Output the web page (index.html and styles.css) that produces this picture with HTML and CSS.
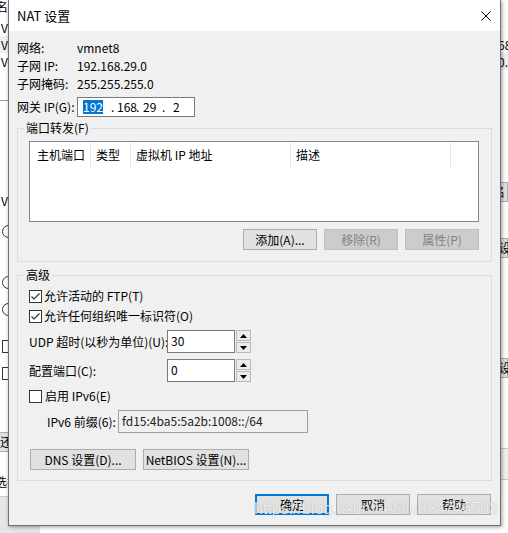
FILE: index.html
```html
<!DOCTYPE html>
<html lang="zh-CN">
<head>
<meta charset="utf-8">
<title>NAT 设置</title>
<link rel="stylesheet" href="styles.css">
</head>
<body>
<div class="desk">
  <div class="win win-left">
    <div class="wl-head">名称</div>
    <div class="wl-row">VMnet0</div>
    <div class="wl-row sel-row">VMnet1</div>
    <div class="wl-row">VMnet8</div>
    <div class="wl-line"></div>
    <div class="wl-row wl-v">VMnet</div>
    <div class="wl-radio"></div>
    <div class="wl-radio r2"></div>
    <div class="wl-radio r3"></div>
    <div class="wl-cb"></div>
    <div class="wl-cb c2"></div>
    <div class="wl-btn">还原默认设置</div>
    <div class="wl-text">选择</div>
    <div class="wl-foot"></div>
  </div>
  <div class="win win-right">
    <div class="wr-row">192.168.2.</div>
    <div class="wr-row alt">168.10.0</div>
    <div class="wr-btn b1">重命名</div>
    <div class="wr-btn b2">设置</div>
    <div class="wr-btn b3">设置</div>
    <div class="wr-foot"></div>
  </div>

  <div class="dialog">
    <div class="titlebar">
      <span class="title">NAT 设置</span>
      <svg class="close" width="10" height="10" viewBox="0 0 10 10"><path d="M0.5 0.5 L9.5 9.5 M9.5 0.5 L0.5 9.5" stroke="#000" stroke-width="1" fill="none"/></svg>
    </div>
    <div class="body">
      <div class="info">
        <span>网络:</span><span>vmnet8</span>
        <span>子网 IP:</span><span>192.168.29.0</span>
        <span>子网掩码:</span><span>255.255.255.0</span>
      </div>
      <div class="gw-row">
        <span class="gw-label">网关 IP(G):</span>
        <div class="ip-box">
          <span><span class="sel">192</span></span><span>.</span><span>168</span><span>.</span><span>29</span><span>.</span><span>2</span>
        </div>
      </div>

      <fieldset class="group">
        <legend>端口转发(F)</legend>
        <div class="pf-inner">
          <div class="listview">
            <div class="lv-head">
              <div class="col c1">主机端口</div>
              <div class="col c2">类型</div>
              <div class="col c3">虚拟机 IP 地址</div>
              <div class="col c4">描述</div>
            </div>
          </div>
          <div class="btn-row">
            <button class="btn">添加(A)...</button>
            <button class="btn" disabled>移除(R)</button>
            <button class="btn" disabled>属性(P)</button>
          </div>
        </div>
      </fieldset>

      <fieldset class="group group-adv">
        <legend>高级</legend>
        <div class="adv-inner">
          <label class="check-row"><span class="cb"><svg width="11" height="11" viewBox="0 0 11 11"><path d="M1.5 5.5 L4 8 L9.5 2.5" stroke="#333" stroke-width="1.2" fill="none"/></svg></span>允许活动的 FTP(T)</label>
          <label class="check-row"><span class="cb"><svg width="11" height="11" viewBox="0 0 11 11"><path d="M1.5 5.5 L4 8 L9.5 2.5" stroke="#333" stroke-width="1.2" fill="none"/></svg></span>允许任何组织唯一标识符(O)</label>
          <div class="field-row udp">
            <span class="field-label">UDP 超时(以秒为单位)(U):</span>
            <div class="spin">
              <div class="spin-input">30</div>
              <div class="spin-btns">
                <div class="spin-btn"><svg width="7" height="4" viewBox="0 0 7 4"><path d="M0 4 L3.5 0 L7 4 Z" fill="#000"/></svg></div>
                <div class="spin-btn"><svg width="7" height="4" viewBox="0 0 7 4"><path d="M0 0 L3.5 4 L7 0 Z" fill="#000"/></svg></div>
              </div>
            </div>
          </div>
          <div class="field-row port">
            <span class="field-label">配置端口(C):</span>
            <div class="spin">
              <div class="spin-input">0</div>
              <div class="spin-btns">
                <div class="spin-btn"><svg width="7" height="4" viewBox="0 0 7 4"><path d="M0 4 L3.5 0 L7 4 Z" fill="#000"/></svg></div>
                <div class="spin-btn"><svg width="7" height="4" viewBox="0 0 7 4"><path d="M0 0 L3.5 4 L7 0 Z" fill="#000"/></svg></div>
              </div>
            </div>
          </div>
          <label class="check-row ipv6"><span class="cb"></span>启用 IPv6(E)</label>
          <div class="prefix-row">
            <span class="prefix-label">IPv6 前缀(6):</span>
            <div class="prefix-box">fd15:4ba5:5a2b:1008::/64</div>
          </div>
          <div class="btn-row left">
            <button class="btn wide">DNS 设置(D)...</button>
            <button class="btn wide">NetBIOS 设置(N)...</button>
          </div>
        </div>
      </fieldset>

      <div class="footer">
        <button class="btn default">确定</button>
        <button class="btn">取消</button>
        <button class="btn">帮助</button>
      </div>
    </div>
  </div>
  <div class="watermark">https://blog.csdn.net/liu884746703</div>
</div>
</body>
</html>
```

FILE: styles.css
```css
html, body {
  margin: 0;
  padding: 0;
}
body {
  width: 508px;
  height: 533px;
  overflow: hidden;
  background: #ffffff;
  font-family: "Noto Sans CJK SC", "Liberation Sans", sans-serif;
  font-size: 12px;
  color: #000;
}
.desk {
  position: relative;
  width: 508px;
  height: 533px;
  overflow: hidden;
}

/* background windows */
.win {
  position: absolute;
  top: 0;
  height: 533px;
  background: #fff;
  overflow: hidden;
}
.win-left {
  left: 0;
  width: 40px;
}
.wl-head {
  height: 19px;
  line-height: 14px;
  margin-left: -4px;
  white-space: nowrap;
}
.wl-row {
  height: 17px;
  line-height: 17px;
  padding-left: 1px;
  white-space: nowrap;
}
.sel-row {
  background: #f0f0f0;
}
.wl-line {
  margin-top: 30px;
  height: 1px;
  background: #a0a0a0;
}
.wl-v {
  margin-top: 91px;
}
.wl-radio {
  margin: 16px 0 0 2px;
  width: 11px;
  height: 11px;
  border: 1px solid #333;
  border-radius: 50%;
}
.wl-radio.r2 {
  margin-top: 38px;
}
.wl-radio.r3 {
  margin-top: 14px;
}
.wl-cb {
  margin: 24px 0 0 2px;
  width: 11px;
  height: 11px;
  border: 1px solid #333;
}
.wl-cb.c2 {
  margin-top: 14px;
}
.wl-btn {
  margin-top: 52px;
  height: 18px;
  line-height: 18px;
  background: #e1e1e1;
  border-top: 1px solid #adadad;
  border-bottom: 1px solid #adadad;
  white-space: nowrap;
}
.wl-text {
  margin-top: 22px;
  line-height: 16px;
  margin-left: -5px;
  white-space: nowrap;
}
.wl-foot {
  margin-top: 6px;
  height: 40px;
  background: #e6e6e6;
  border-top: 1px solid #c8c8c8;
}
.win-right {
  left: 468px;
  width: 40px;
  background: #fff;
}
.wr-row {
  margin-top: 36px;
  height: 17px;
  line-height: 17px;
  text-align: right;
  padding-right: 1px;
  white-space: nowrap;
}
.wr-row.alt {
  margin-top: 0;
  background: #f0f0f0;
}
.wr-btn {
  height: 18px;
  line-height: 18px;
  background: #e1e1e1;
  border: 1px solid #adadad;
  padding-left: 30px;
  white-space: nowrap;
}
.wr-btn.b1 {
  margin-top: 112px;
  padding-left: 0;
}
.wr-btn.b2 {
  margin-top: 36px;
}
.wr-btn.b3 {
  margin-top: 100px;
}
.wr-foot {
  margin-top: 70px;
  height: 30px;
  border-top: 1px solid #c8c8c8;
  border-bottom: 1px solid #c8c8c8;
  background: #f0f0f0;
}

/* dialog */
.dialog {
  position: relative;
  z-index: 1;
  margin-left: 8px;
  width: 493px;
  height: 526px;
  box-sizing: border-box;
  border: 1px solid #6f6f6f;
  border-top: none;
  background: #f0f0f0;
  box-shadow: 1px 1px 4px rgba(0, 0, 0, 0.4);
  display: flex;
  flex-direction: column;
}
.titlebar {
  height: 31px;
  flex: none;
  background: #fff;
  display: flex;
  align-items: center;
  justify-content: space-between;
  padding: 0 9px 0 8px;
}
.title {
  font-size: 13px;
  line-height: 16px;
}
.close {
  display: block;
}
.body {
  flex: 1;
  padding: 8px 8px 10px;
}
.info {
  display: grid;
  grid-template-columns: 60px auto;
  grid-auto-rows: 18px;
  line-height: 18px;
}
.gw-row {
  margin-top: 4px;
  height: 20px;
  display: flex;
  align-items: center;
}
.gw-label {
  width: 60px;
  line-height: 18px;
}
.ip-box {
  width: 118px;
  height: 20px;
  box-sizing: border-box;
  border: 1px solid #7a7a7a;
  background: #fff;
  padding-left: 5px;
  display: grid;
  grid-template-columns: 28px 6px 19px 7px 19px 11px auto;
  align-items: center;
  line-height: 18px;
}
.sel {
  display: inline-block;
  background: #0078d7;
  color: #fff;
  line-height: 14px;
  height: 14px;
}

/* group boxes */
.group {
  margin: 4px 0 0;
  padding: 0;
  border: 1px solid #dcdcdc;
  min-inline-size: 0;
}
.group legend {
  margin-left: 6px;
  padding: 0 2px;
  line-height: 14px;
  font-size: 12px;
}
.group-adv {
  margin-top: 6px;
}
.pf-inner {
  padding: 6px 12px 11px 11px;
}
.listview {
  height: 81px;
  box-sizing: border-box;
  border: 1px solid #828790;
  background: #fff;
}
.lv-head {
  display: flex;
  padding-top: 1px;
}
.col {
  height: 24px;
  line-height: 24px;
  box-sizing: border-box;
  border-right: 1px solid #e5e5e5;
  padding-left: 6px;
  white-space: nowrap;
}
.c1 { width: 61px; padding-left: 7px; }
.c2 { width: 40px; padding-left: 5px; }
.c3 { width: 160px; padding-left: 5px; }
.c4 { width: 160px; padding-left: 5px; }

.btn-row {
  margin-top: 7px;
  display: flex;
  justify-content: flex-end;
  gap: 7px;
}
.btn {
  font: inherit;
  color: #000;
  width: 74px;
  height: 21px;
  box-sizing: border-box;
  border: 1px solid #adadad;
  background: #e1e1e1;
  padding: 0;
  line-height: 19px;
  text-align: center;
  white-space: nowrap;
}
.btn:disabled {
  background: #cccccc;
  border-color: #bfbfbf;
  color: #838383;
}
.btn.default {
  border: 2px solid #0078d7;
  line-height: 17px;
}

/* advanced group */
.adv-inner {
  padding: 4px 12px 10px 11px;
}
.check-row {
  height: 20px;
  display: flex;
  align-items: center;
  gap: 2px;
  line-height: 18px;
}
.cb {
  width: 13px;
  height: 13px;
  box-sizing: border-box;
  border: 1px solid #333;
  background: #fff;
  display: flex;
  align-items: center;
  justify-content: center;
  flex: none;
}
.cb svg {
  display: block;
}
.field-row {
  display: flex;
  align-items: center;
  height: 23px;
}
.field-row.udp {
  margin-top: 4px;
}
.field-row.port {
  margin-top: 6px;
}
.field-label {
  width: 138px;
  line-height: 18px;
  white-space: nowrap;
}
.spin {
  display: flex;
  gap: 1px;
  height: 23px;
}
.spin-input {
  width: 68px;
  height: 23px;
  box-sizing: border-box;
  border: 1px solid #7a7a7a;
  background: #fff;
  padding-left: 3px;
  line-height: 19px;
}
.spin-btns {
  width: 15px;
  display: flex;
  flex-direction: column;
  gap: 1px;
}
.spin-btn {
  flex: 1;
  box-sizing: border-box;
  border: 1px solid #b9b9b9;
  background: #ececec;
  display: flex;
  align-items: center;
  justify-content: center;
}
.spin-btn svg {
  display: block;
}
.check-row.ipv6 {
  margin-top: 4px;
  gap: 3px;
}
.prefix-row {
  margin-top: 4px;
  display: flex;
  align-items: center;
  height: 23px;
}
.prefix-label {
  width: 89px;
  box-sizing: border-box;
  padding-left: 18px;
  line-height: 18px;
  white-space: nowrap;
}
.prefix-box {
  width: 190px;
  height: 23px;
  box-sizing: border-box;
  border: 1px solid #a0a0a0;
  background: #f0f0f0;
  padding-left: 3px;
  line-height: 20px;
  color: #222;
}
.btn-row.left {
  margin-top: 16px;
  justify-content: flex-start;
  padding-left: 1px;
}
.btn.wide {
  width: 106px;
}

.footer {
  margin-top: 13px;
  display: flex;
  justify-content: flex-end;
  gap: 7px;
  padding-right: 1px;
}

.watermark {
  position: absolute;
  z-index: 2;
  left: 254px;
  top: 499px;
  font-family: "Liberation Sans", sans-serif;
  font-size: 16px;
  line-height: 20px;
  color: rgba(255, 255, 255, 0.85);
  text-shadow: 0 0 1px rgba(0, 0, 0, 0.35);
  white-space: nowrap;
}
```
